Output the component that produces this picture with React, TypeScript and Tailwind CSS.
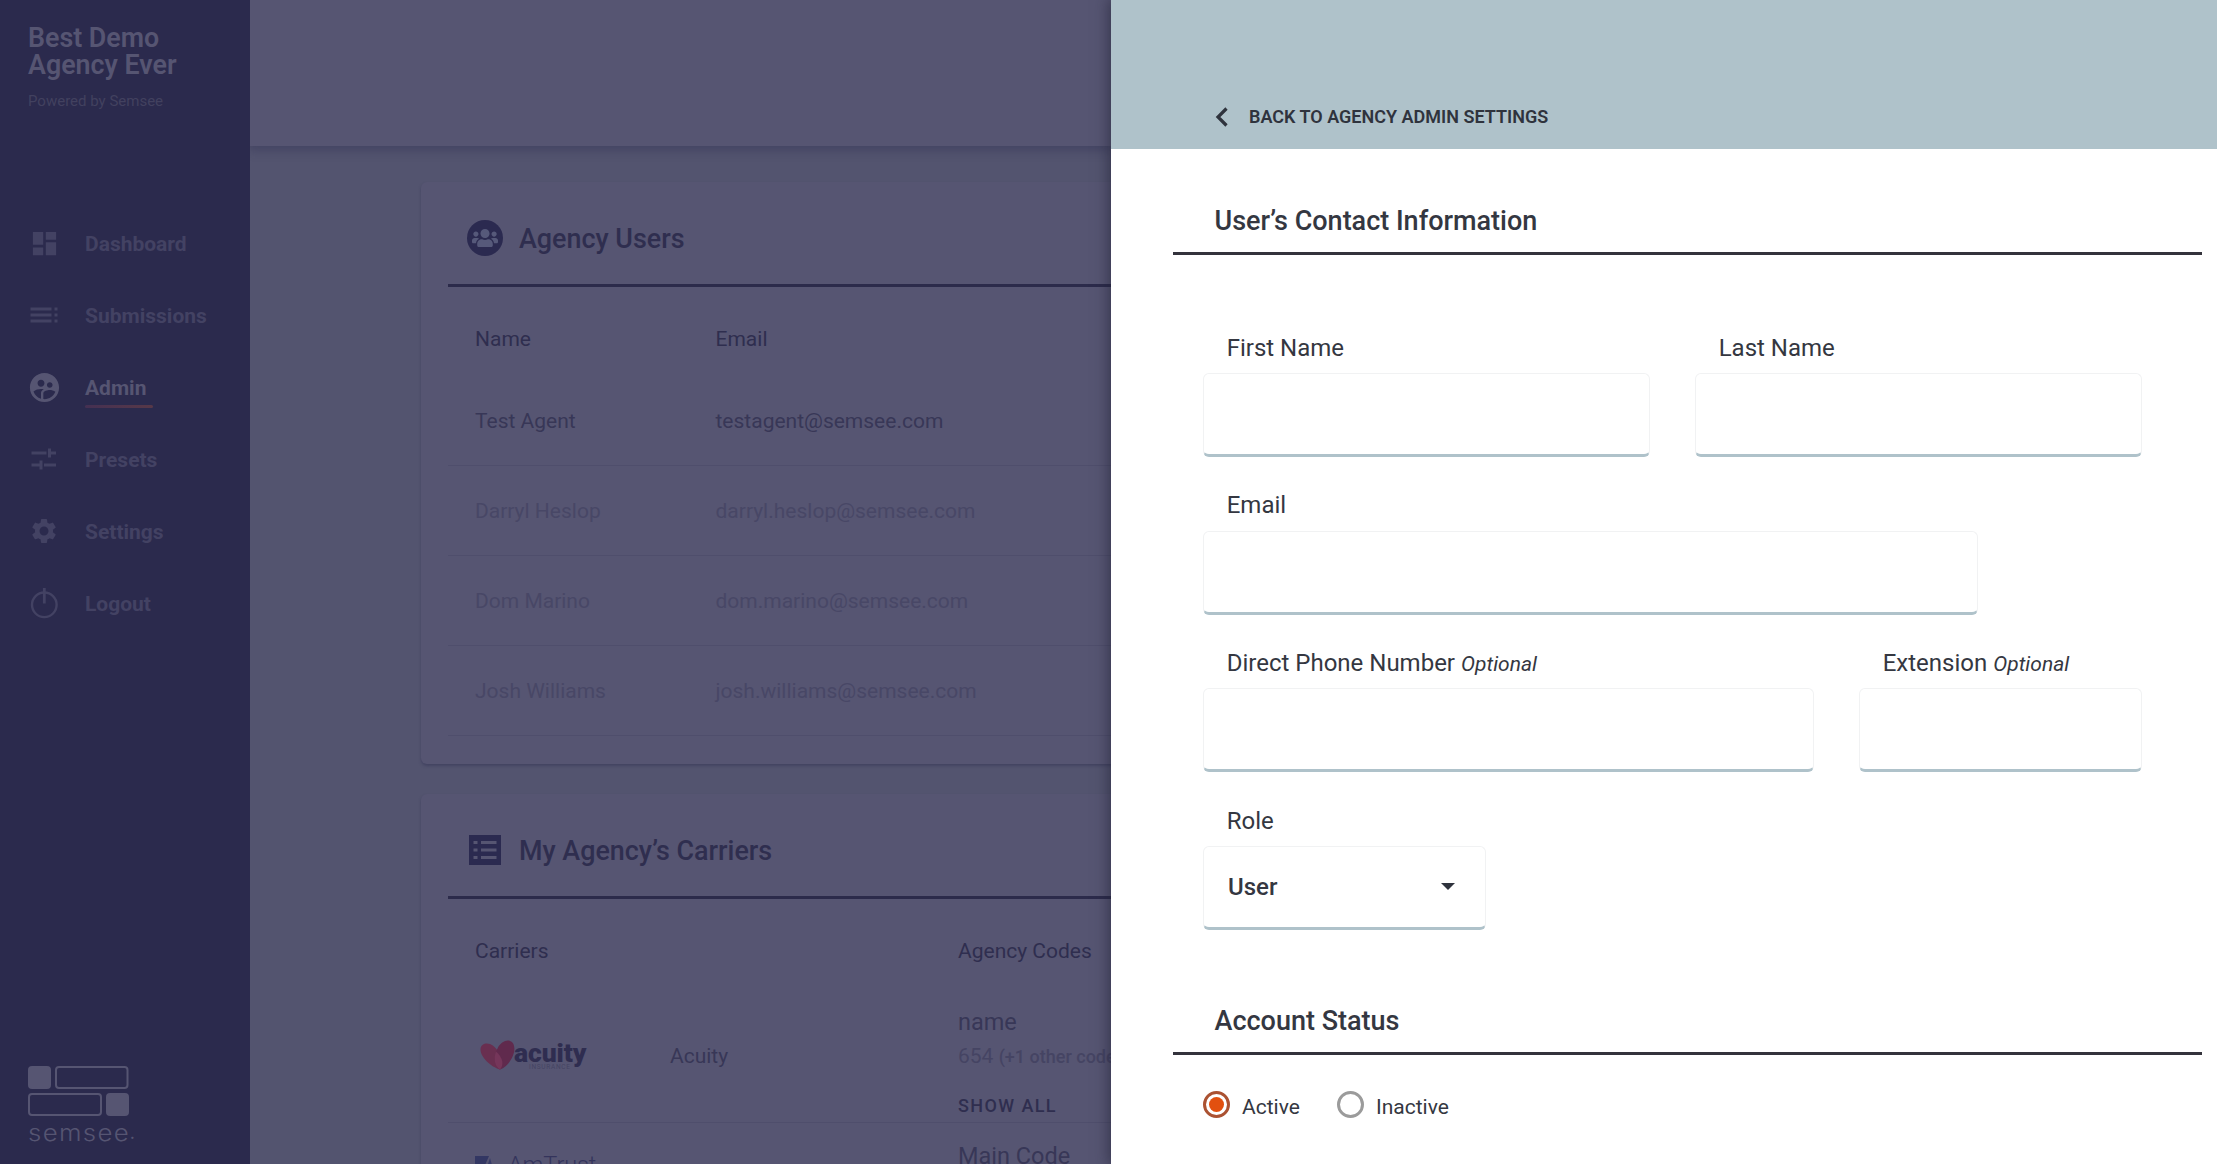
import React from "react";
import { MdDashboard, MdToc, MdSupervisedUserCircle, MdSettings } from "react-icons/md";
import { FaUsers } from "react-icons/fa";

function TuneIcon() {
  return (
    <svg width="26" height="22" viewBox="0 0 26 22" fill="none" stroke="currentColor" strokeWidth="3">
      <path d="M0.5 5H15.5M19 5H25M18.5 0.5V9.5M0.5 17H9M13 17H25M10 12.5V21.5" />
    </svg>
  );
}

function PowerIcon() {
  return (
    <svg width="28" height="32" viewBox="0 0 28 32" fill="none" stroke="currentColor" strokeWidth="2.4">
      <circle cx="14.300" cy="17.800" r="12.300" />
      <path d="M14.300 1V16.500" strokeWidth="2.800" />
    </svg>
  );
}

function ListIcon() {
  return (
    <svg width="32" height="30" viewBox="0 0 32 30">
      <rect width="32" height="30" fill="#2b2a50" />
      <path
        d="M4.5 7.5H8.5M12 7.5H27.5M4.5 15H8.5M12 15H27.5M4.5 22.5H8.5M12 22.5H27.5"
        stroke="#565572"
        strokeWidth="3"
      />
    </svg>
  );
}

function HeartLogo() {
  return (
    <svg width="35" height="30" viewBox="0 0 35 30" className="shrink-0">
      <path d="M20 29.500C11 27 0.500 17 0.500 9.500C0.500 3.500 6.500 2.500 10 4C13.500 5.500 16 8 17.500 10.500C21 15 24 23 20 29.500Z" fill="#692f50" />
      <path d="M20 29.500C14 27 13.500 16 17.500 8.500C20.500 2.500 26-0.500 30 1C35 2.500 35.300 10 33 15.500C30 22.500 26 27.500 20 29.500Z" fill="#602a4d" />
      <path d="M20 29.500C14.500 27 13.500 18 16 11.500C19.500 14.500 21.500 18 22.200 21C22.800 24.500 22 27.500 20 29.500Z" fill="#75365a" />
    </svg>
  );
}

function SemseeLogo() {
  return (
    <svg width="101" height="50" viewBox="0 0 101 50" className="block">
      <rect x="0" y="0" width="23" height="23" rx="4" fill="#565572" />
      <rect x="28" y="1" width="71.500" height="21" rx="3" fill="none" stroke="#565572" strokeWidth="2" />
      <rect x="1" y="28" width="72" height="21" rx="3" fill="none" stroke="#565572" strokeWidth="2" />
      <rect x="78" y="27" width="23" height="23" rx="4" fill="#565572" />
    </svg>
  );
}

const nav = [
  { label: "Dashboard", icon: <MdDashboard size={31} /> },
  { label: "Submissions", icon: <MdToc size={36} /> },
  { label: "Admin", icon: <MdSupervisedUserCircle size={35} />, active: true },
  { label: "Presets", icon: <TuneIcon /> },
  { label: "Settings", icon: <MdSettings size={30} /> },
  { label: "Logout", icon: <PowerIcon /> },
];

const users = [
  { name: "Test Agent", email: "testagent@semsee.com", active: true },
  { name: "Darryl Heslop", email: "darryl.heslop@semsee.com" },
  { name: "Dom Marino", email: "dom.marino@semsee.com" },
  { name: "Josh Williams", email: "josh.williams@semsee.com" },
];

function Sidebar() {
  return (
    <aside className="flex h-full w-[250px] shrink-0 flex-col bg-[#2b2a4d] pt-[25px]">
      <div className="pl-7 text-[26.8px] leading-[27px] font-semibold text-[#565572]">
        Best Demo
        <br />
        Agency Ever
      </div>
      <div className="mt-3 pl-7 text-[15px] leading-5 text-[#42415f]">Powered by Semsee</div>
      <nav className="mt-24">
        {nav.map((n) => (
          <div
            key={n.label}
            className={`flex h-[72px] items-center pl-6 ${n.active ? "text-[#565572]" : "text-[#434263]"}`}
          >
            <span className="flex w-10 justify-center">{n.icon}</span>
            <span className="relative ml-[21px] pt-[2px] text-[21px] leading-6 font-bold">
              {n.label}
              {n.active && (
                <span className="absolute top-[31px] left-0 h-[3px] w-[68px] rounded-full bg-linear-to-r from-[#453052] to-[#573848]" />
              )}
            </span>
          </div>
        ))}
      </nav>
      <div className="mt-auto mb-[18px] pl-7 text-[#565572]">
        <SemseeLogo />
        <div className="mt-[4px] mb-px flex font-['Inter'] text-[23.5px] leading-[25px] font-light">
          <span className="origin-left scale-x-110 tracking-[1.2px]">semsee</span>
          <span className="ml-[9px] text-[18px] font-normal">.</span>
        </div>
      </div>
    </aside>
  );
}

function CardTitle({ icon, children }: { icon: React.ReactNode; children: React.ReactNode }) {
  return (
    <div className="flex h-[105px] items-center border-b-3 border-[#2c2b4b] pt-[10px] pl-[19px]">
      <span className="flex w-9 justify-center">{icon}</span>
      <h2 className="ml-4 pt-[2px] text-[26.9px] leading-8 font-medium whitespace-nowrap">{children}</h2>
    </div>
  );
}

function Background() {
  return (
    <div className="flex h-full w-[861px] shrink-0 flex-col overflow-hidden bg-[#53546f] text-[#2f2e4f]">
      <header className="h-[146px] shrink-0 bg-[#565572] shadow-[0_2px_10px_2px_rgba(43,42,77,0.4)]" />
      <main className="flex flex-col gap-[30px] pt-9 pl-[171px]">
        <section className="h-[582px] w-[1200px] rounded-md bg-[#565572] pl-[27px] shadow-[0_2px_3px_rgba(43,42,77,0.4)]">
          <CardTitle
            icon={
              <span className="flex size-9 items-center justify-center rounded-full bg-[#2b2a50] text-[#56597a]">
                <FaUsers size={26} />
              </span>
            }
          >
            Agency Users
          </CardTitle>
          <div className="flex h-[89px] pt-10 pl-[27px] text-[21px] leading-6">
            <span className="w-[240.5px]">Name</span>
            <span>Email</span>
          </div>
          {users.map((u) => (
            <div
              key={u.name}
              className={`flex h-[90px] items-center border-b border-[#4f4e6c] pt-[2px] pl-[27px] text-[21px] ${u.active ? "text-[#383757]" : "text-[#484766]"}`}
            >
              <span className="w-[240.5px] shrink-0">{u.name}</span>
              <span>{u.email}</span>
            </div>
          ))}
        </section>
        <section className="h-[600px] w-[1200px] rounded-md bg-[#565572] pl-[27px] shadow-[0_2px_3px_rgba(43,42,77,0.4)]">
          <CardTitle icon={<ListIcon />}>My Agency’s Carriers</CardTitle>
          <div className="flex h-[89px] pt-10 pl-[27px] text-[21px] leading-6">
            <span className="w-[483px]">Carriers</span>
            <span>Agency Codes</span>
          </div>
          <div className="flex h-[135px] items-center border-b border-[#4f4e6c] pl-[27px] text-[#383757]">
            <div className="flex w-[195px] items-center pl-[5px]">
              <HeartLogo />
              <div className="relative -ml-px pb-1 text-[26.5px] leading-7 font-black tracking-[-0.1px] text-[#2f2d50]">
                acuity
                <span className="absolute top-[24px] left-[15px] text-[6.5px] leading-2 font-normal tracking-[0.7px] text-[#454463]">
                  INSURANCE
                </span>
              </div>
            </div>
            <span className="w-[288px] pt-1 text-[21px]">Acuity</span>
            <div className="pt-[17px] whitespace-nowrap">
              <div className="text-[23.5px] leading-8">name</div>
              <div className="mt-[2px] text-[21px] leading-8 text-[#454463]">
                654 <span className="text-[18px] font-medium">(+1 other codes)</span>
              </div>
              <div className="mt-[17px] text-[18px] leading-8 font-medium tracking-[1.4px] text-[#2f2e4f]">
                SHOW ALL
              </div>
            </div>
          </div>
          <div className="flex pt-[17px] pl-[27px] text-[#383757]">
            <div className="flex w-[483px] pt-[11px]">
              <svg width="24" height="24" viewBox="0 0 24 24" className="mt-[4px]">
                <path d="M0 1H14L4 24H0Z" fill="#333763" />
                <path d="M15 3L21 24H8Z" fill="#373b68" />
              </svg>
              <span className="ml-[9px] text-[23.5px] leading-7 font-light tracking-[-0.1px] text-[#34345c]">AmTrust</span>
            </div>
            <span className="text-[23.5px] leading-8 whitespace-nowrap">Main Code</span>
          </div>
        </section>
      </main>
    </div>
  );
}

function Field({
  label,
  optional,
  className,
  children,
}: {
  label: string;
  optional?: boolean;
  className: string;
  children?: React.ReactNode;
}) {
  return (
    <div className={className}>
      <div className="flex h-[42px] items-baseline pt-[0.6px] pl-[23.7px] text-[24px] leading-8 whitespace-nowrap">
        {label}
        {optional && <em className="ml-[6px] text-[21px]">Optional</em>}
      </div>
      <div className="flex h-[84px] items-center justify-between rounded-md border border-b-3 border-[#f1f2f3] border-b-[#afc2ca] bg-white px-6">
        {children}
      </div>
    </div>
  );
}

function SectionTitle({ children }: { children: React.ReactNode }) {
  return (
    <h2 className="flex h-[50px] border-b-3 border-[#34333c] pl-[41.5px] text-[27px] leading-8 font-medium">
      {children}
    </h2>
  );
}

function Drawer() {
  return (
    <section className="relative flex h-full w-[1106px] shrink-0 flex-col bg-white text-[#343741] shadow-[0_0_14px_2px_rgba(30,30,50,0.6)]">
      <header className="flex h-[149px] shrink-0 items-end bg-[#afc2ca] pb-[20px] pl-[103px] text-[#2f333d]">
        <svg width="15" height="24" viewBox="0 0 15 24" fill="none" stroke="currentColor" strokeWidth="3.200">
          <path d="M12.500 3.500L4 12L12.500 20.500" />
        </svg>
        <span className="ml-5 text-[18px] leading-6 font-semibold">BACK TO AGENCY ADMIN SETTINGS</span>
      </header>
      <div className="pt-14 pl-[62px] pr-[15px]">
        <SectionTitle>User’s Contact Information</SectionTitle>
        <div className="flex flex-col gap-[31.67px] pt-[76px] pl-[30px]">
          <div className="flex gap-[45px]">
            <Field className="w-[447px]" label="First Name" />
            <Field className="w-[447px]" label="Last Name" />
          </div>
          <Field className="w-[775px]" label="Email" />
          <div className="flex gap-[45px]">
            <Field className="w-[611px]" label="Direct Phone Number" optional />
            <Field className="w-[283px]" label="Extension" optional />
          </div>
          <Field className="w-[283px]" label="Role">
            <span className="text-[24px] font-medium">User</span>
            <span className="mr-[6px] border-x-[7px] border-t-[7px] border-x-transparent border-t-[#2f333d]" />
          </Field>
        </div>
        <div className="mt-[75px]">
          <SectionTitle>Account Status</SectionTitle>
        </div>
        <div className="flex pt-9 pl-[30px] text-[21px] leading-[33px]">
          <span className="flex size-[27px] items-center justify-center rounded-full border-3 border-[#ab5232]">
            <span className="size-[15px] rounded-full bg-[#e2500f]" />
          </span>
          <span className="ml-3 w-[95px]">Active</span>
          <span className="size-[27px] rounded-full border-3 border-[#9b9b9b]" />
          <span className="ml-3">Inactive</span>
        </div>
      </div>
    </section>
  );
}

export default function App() {
  return (
    <div className="flex h-[1164px] w-[2217px] overflow-hidden font-['Roboto',sans-serif]">
      <Sidebar />
      <Background />
      <Drawer />
    </div>
  );
}
